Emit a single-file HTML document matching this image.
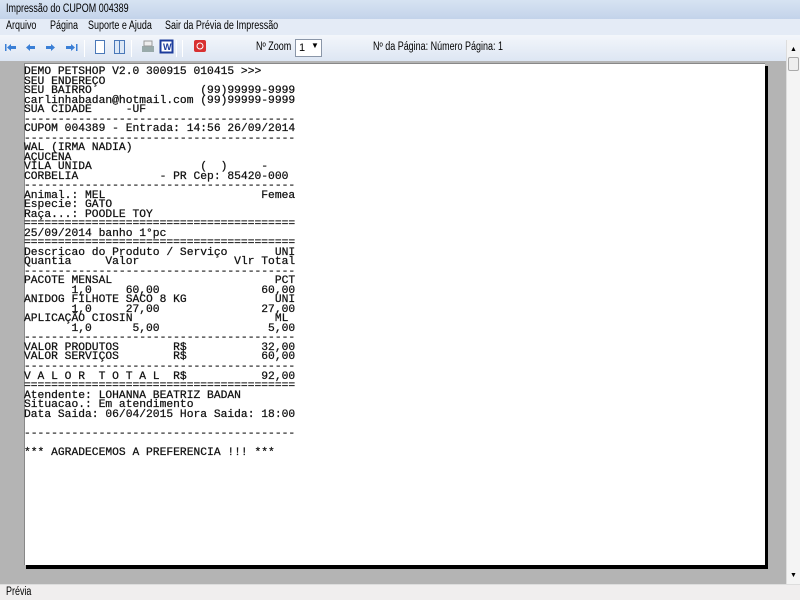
<!DOCTYPE html>
<html><head><meta charset="utf-8"><style>
*{margin:0;padding:0;box-sizing:border-box}
body{width:800px;height:600px;overflow:hidden;position:relative;background:#b4b4b4;font-family:"Liberation Sans",sans-serif;font-size:11px;color:#000}
.abs{position:absolute}
.sx{transform:scaleX(0.78);transform-origin:left top;white-space:nowrap}
#title{left:0;top:0;width:800px;height:19px;background:linear-gradient(#d7e3f2,#c3d3ea);}
#title span{position:absolute;left:6px;top:3px;font-size:11.5px}
#menu{left:0;top:19px;width:800px;height:16px;background:#e4ebf6}
#menu span{position:absolute;top:1px;font-size:11.5px}
#tool{left:0;top:35px;width:800px;height:26px;background:linear-gradient(#f3f6fb,#dde6f3)}
.sep{position:absolute;top:5px;width:1px;height:17px;background:#a8b4c6;border-right:1px solid #fff}
#page{left:24px;top:63px;width:741px;height:502px;background:#fff;border-left:1px solid #888;border-top:1px solid #888}
#shr{left:764px;top:66px;width:4px;height:503px;background:#000}
#shb{left:26px;top:565px;width:742px;height:4px;background:#000}
pre{position:absolute;left:24px;top:68px;font-family:"Liberation Mono","Courier New",monospace;font-size:11.3px;line-height:9.52px;color:#111;-webkit-text-stroke:0.25px #111}
#sb{left:786px;top:40px;width:14px;height:544px;background:#f4f4f4;border-left:1px solid #ddd}
#status{left:0;top:584px;width:800px;height:16px;background:#f0eeee;border-top:1px solid #ddd}
#status span{position:absolute;left:6px;top:1px;font-size:11.5px}
</style></head><body>
<div id="title" class="abs"><span class="sx">Impressão do CUPOM 004389</span></div>
<div id="menu" class="abs"><span class="sx" style="left:6px">Arquivo</span><span class="sx" style="left:50px">Página</span><span class="sx" style="left:88px">Suporte e Ajuda</span><span class="sx" style="left:165px">Sair da Prévia de Impressão</span></div>
<div id="tool" class="abs">
<svg class="abs" style="left:0;top:0" width="220" height="26">
<g fill="#3a7fd6">
<rect x="5" y="9" width="1.5" height="7"/><path d="M7 12.5l4-3.5v2h5v3h-5v2z"/>
<path d="M26 12.5l4-3.5v2h5v3h-5v2z"/>
<path d="M55 12.5l-4-3.5v2h-5v3h5v2z"/>
<path d="M75 12.5l-4-3.5v2h-5v3h5v2z"/><rect x="76" y="9" width="1.5" height="7"/>
</g>
<rect x="95.5" y="5.5" width="9" height="13" fill="#fff" stroke="#4a78b8"/>
<rect x="114.5" y="5.5" width="5" height="13" fill="#dde8f6" stroke="#4a78b8"/><rect x="119.5" y="5.5" width="5" height="13" fill="#dde8f6" stroke="#4a78b8"/>
<rect x="142" y="11" width="12" height="6" fill="#9aa" /><rect x="144" y="6" width="8" height="5" fill="#eee" stroke="#999"/>
<rect x="160.5" y="5.5" width="12" height="12" fill="#fff" stroke="#1c3c9c" stroke-width="2"/>
<text x="163" y="15" font-size="9" font-family="Liberation Sans" font-weight="bold" fill="#1c3c9c">W</text>
<rect x="194" y="5" width="12" height="12" rx="2" fill="#d83030"/><circle cx="200" cy="11" r="3" fill="none" stroke="#fff"/>
</svg>
<div class="sep" style="left:84px"></div><div class="sep" style="left:131px"></div><div class="sep" style="left:176px"></div><div class="sep" style="left:182px"></div>
<span class="abs sx" style="left:256px;top:6px;font-size:11.5px">Nº Zoom</span>
<div class="abs" style="left:295px;top:4px;width:27px;height:18px;background:#fff;border:1px solid #8a96a8"><span style="position:absolute;left:3px;top:2px">1</span><span style="position:absolute;left:15px;top:1px;font-size:8px">▼</span></div>
<span class="abs sx" style="left:373px;top:6px;font-size:11.5px">Nº da Página: Número Página: 1</span>
</div>
<div id="shr" class="abs"></div><div id="shb" class="abs"></div>
<div id="page" class="abs"></div>
<pre>DEMO PETSHOP V2.0 300915 010415 &gt;&gt;&gt;
SEU ENDEREÇO
SEU BAIRRO                (99)99999-9999
carlinhabadan@hotmail.com (99)99999-9999
SUA CIDADE     -UF
----------------------------------------
CUPOM 004389 - Entrada: 14:56 26/09/2014
----------------------------------------
WAL (IRMA NADIA)
AÇUCENA
VILA UNIDA                (  )     -
CORBELIA            - PR Cep: 85420-000
----------------------------------------
Animal.: MEL                       Femea
Especie: GATO
Raça...: POODLE TOY
========================================
25/09/2014 banho 1°pc
========================================
Descricao do Produto / Serviço       UNI
Quantia     Valor              Vlr Total
----------------------------------------
PACOTE MENSAL                        PCT
       1,0     60,00               60,00
ANIDOG FILHOTE SACO 8 KG             UNI
       1,0     27,00               27,00
APLICAÇÃO CIOSIN                     ML
       1,0      5,00                5,00
----------------------------------------
VALOR PRODUTOS        R$           32,00
VALOR SERVIÇOS        R$           60,00
----------------------------------------
V A L O R  T O T A L  R$           92,00
========================================
Atendente: LOHANNA BEATRIZ BADAN
Situacao.: Em atendimento
Data Saida: 06/04/2015 Hora Saida: 18:00

----------------------------------------

*** AGRADECEMOS A PREFERENCIA !!! ***</pre>
<div id="sb" class="abs"><span class="abs" style="left:3px;top:6px;font-size:7px">▲</span><div class="abs" style="left:1px;top:17px;width:11px;height:14px;border:1px solid #aaa;background:#eee;border-radius:2px"></div><span class="abs" style="left:3px;top:532px;font-size:7px">▼</span></div>
<div id="status" class="abs"><span class="sx">Prévia</span></div>
</body></html>
